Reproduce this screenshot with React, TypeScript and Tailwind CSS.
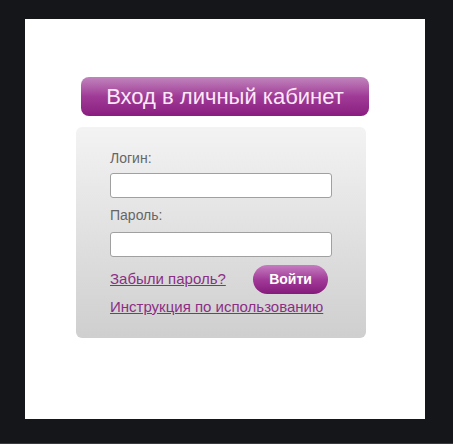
export default function App() {
  return (
    <div className="w-[453px] h-[444px] bg-[#151619] overflow-hidden font-['Liberation_Sans',Arial,sans-serif] border-b border-[#3a3b3e]">
      <div className="ml-[25px] mt-[19px] w-[400px] h-[400px] bg-white flex flex-col items-start pt-[58px]">
        {/* Header */}
        <div className="ml-[56px] w-[288px] h-[39px] rounded-[8px] bg-gradient-to-b from-[#c084bd] via-[#a03a97] to-[#8a1d80] flex items-center justify-center text-[22px] text-[#fbe9f8]">
          Вход в личный кабинет
        </div>

        {/* Form box */}
        <div className="ml-[51px] mt-[11px] w-[290px] h-[211px] rounded-[6px] bg-gradient-to-b from-[#f3f3f3] to-[#cfcfcf] pl-[34px] pt-[22px]">
          <div className="text-[14px] text-[#666] leading-[18px]">Логин:</div>
          <input className="mt-[6px] block w-[222px] h-[25px] rounded-[3px] border border-[#a0a0a0] bg-white" />
          <div className="mt-[8px] text-[14px] text-[#666] leading-[18px]">Пароль:</div>
          <input className="mt-[8px] block w-[222px] h-[25px] rounded-[3px] border border-[#a0a0a0] bg-white" />
          <div className="mt-[8px] flex items-center">
            <a className="text-[15px] text-[#8b2f85] underline w-[143px]">Забыли пароль?</a>
            <button className="w-[75px] h-[29px] rounded-full bg-gradient-to-b from-[#c57cc0] via-[#a23a99] to-[#851a7b] text-white font-bold text-[14px]">
              Войти
            </button>
          </div>
          <a className="block mt-[2px] text-[15px] text-[#8b2f85] underline">Инструкция по использованию</a>
        </div>
      </div>
    </div>
  )
}
